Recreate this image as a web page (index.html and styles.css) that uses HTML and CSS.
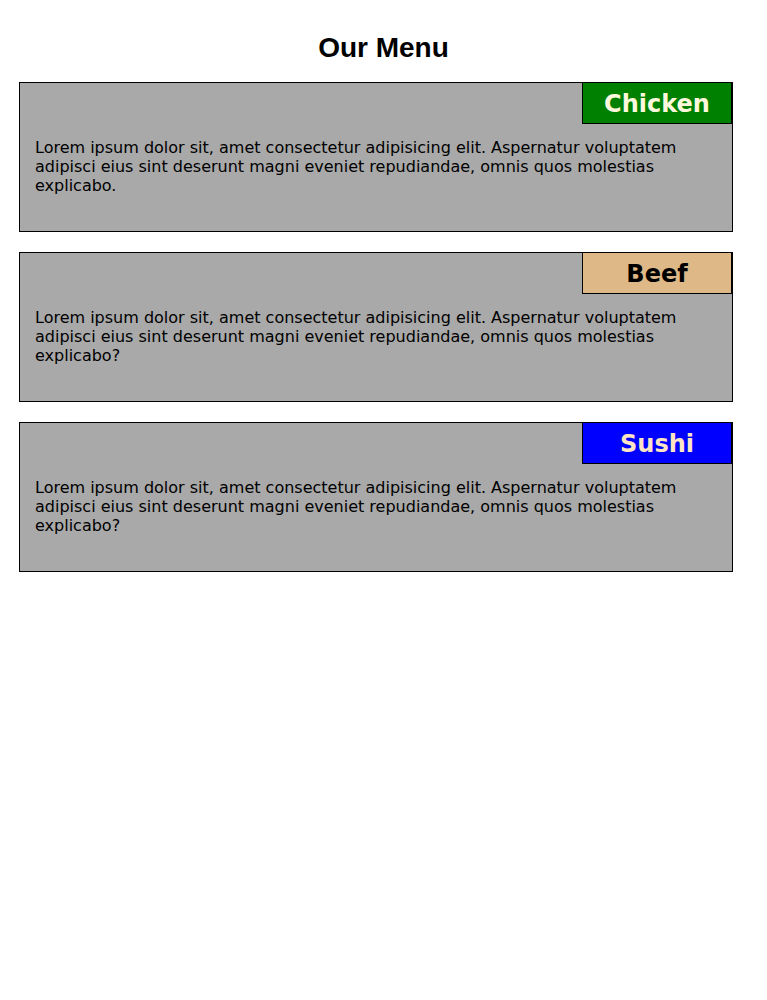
FILE: index.html
```html
<!DOCTYPE html>
<html>
<head>
<meta charset="utf-8">
<title>Our Menu</title>
<link rel="stylesheet" href="styles.css">
</head>
<body>
<h1 class="title">Our Menu</h1>
<div class="menu">
  <div class="card">
    <div class="label chicken">Chicken</div>
    <p class="desc">Lorem ipsum dolor sit, amet consectetur adipisicing elit. Aspernatur voluptatem adipisci eius sint deserunt magni eveniet repudiandae, omnis quos molestias explicabo.</p>
  </div>
  <div class="card">
    <div class="label beef">Beef</div>
    <p class="desc">Lorem ipsum dolor sit, amet consectetur adipisicing elit. Aspernatur voluptatem adipisci eius sint deserunt magni eveniet repudiandae, omnis quos molestias explicabo?</p>
  </div>
  <div class="card">
    <div class="label sushi">Sushi</div>
    <p class="desc">Lorem ipsum dolor sit, amet consectetur adipisicing elit. Aspernatur voluptatem adipisci eius sint deserunt magni eveniet repudiandae, omnis quos molestias explicabo?</p>
  </div>
</div>
</body>
</html>
```
FILE: styles.css
```css
html, body {
  margin: 0;
  padding: 0;
  background: #fff;
}
body {
  font-family: "DejaVu Sans", sans-serif;
  font-size: 16px;
  color: #000;
}
.title {
  font-family: "Liberation Sans", Arial, sans-serif;
  font-size: 28px;
  font-weight: bold;
  text-align: center;
  margin: 32px 0 18px 0;
  line-height: 32px;
}
.menu {
  display: flex;
  flex-direction: column;
  gap: 20px;
  margin-left: 19px;
  width: 714px;
}
.card {
  position: relative;
  box-sizing: border-box;
  height: 150px;
  background: #a9a9a9;
  border: 1px solid #000;
  padding: 55px 15px 0 15px;
}
.desc {
  margin: 0;
}
.label {
  position: absolute;
  top: -1px;
  right: 0;
  box-sizing: border-box;
  width: 150px;
  height: 42px;
  border: 1px solid #000;
  display: flex;
  align-items: center;
  justify-content: center;
  font-weight: bold;
  font-size: 24px;
  padding-top: 1px;
}
.chicken {
  background: #008000;
  color: #fff8dc;
}
.beef {
  background: #deb887;
  color: #000;
}
.sushi {
  background: #0000ff;
  color: #ffe4c4;
}
```
